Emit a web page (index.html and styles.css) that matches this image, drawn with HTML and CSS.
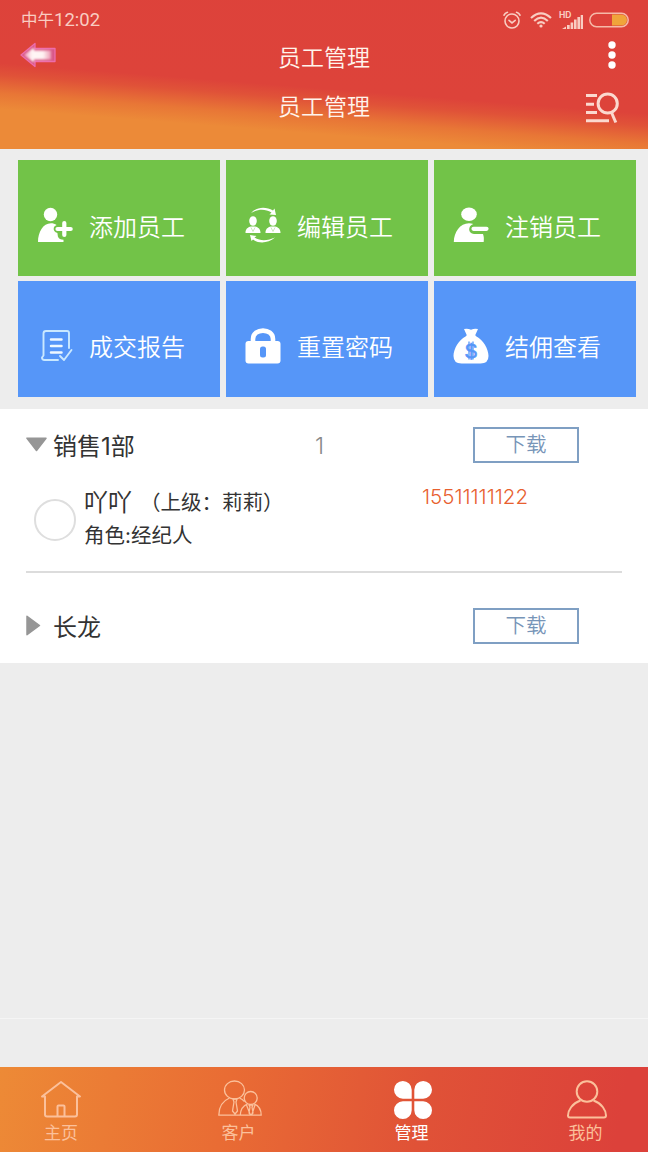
FILE: index.html
```html
<!DOCTYPE html>
<html lang="zh-CN">
<head>
<meta charset="utf-8">
<title>员工管理</title>
<link rel="stylesheet" href="styles.css">
</head>
<body>
<div class="app">
  <header class="header">
    <div class="status">
      <span class="clock">中午<span class="digits">12:02</span></span>
      <div class="status-icons">
        <svg class="alarm" viewBox="0 0 20 18" width="20" height="18" fill="none" stroke="currentColor" stroke-width="1.600" stroke-linecap="round"><circle cx="10" cy="10" r="7"/><path d="M2 4.200Q3 2 5.400 1.300M18 4.200Q17 2 14.600 1.300M7 9.300l3 2.600 3.200-2.600"/></svg>
        <svg class="wifi" viewBox="0 0 22 16" width="22" height="16" fill="none" stroke="currentColor" stroke-width="2.100"><path d="M1 6Q11-3.400 21 6M4.200 9Q11 2.400 17.800 9M7.300 11.800Q11 8.300 14.700 11.800"/><circle cx="11" cy="14" r="1.600" fill="currentColor" stroke="none"/></svg>
        <div class="signal">
          <span class="hd">HD</span>
          <svg viewBox="0 0 22 14" width="22" height="14" fill="currentColor"><path d="M1 14l4-2.500V14zM6 10h2.700v4H6zM9.600 7.500h2.600V14H9.600zM13 4.500h2.600V14H13zM16.400 2H19v12h-2.600zM19.700 0H22v14h-2.300z"/></svg>
        </div>
        <svg viewBox="0 0 40 16" width="40" height="16"><rect x=".8" y="1.200" width="38.400" height="13.600" rx="6.800" fill="none" stroke="#f6b9a8" stroke-width="1.500"/><path d="M23 2.500h9.500a5.500 5.500 0 0 1 0 11H23z" fill="#f0a43b"/></svg>
      </div>
    </div>
    <div class="titlebar">
      <svg class="back" viewBox="0 0 38 28" width="38" height="28">
        <defs>
          <linearGradient id="arrow-fill" x1="0" x2="1"><stop offset="0" stop-color="#f29cbd"/><stop offset=".3" stop-color="#fff5f5"/><stop offset=".7" stop-color="#fff3f3"/><stop offset="1" stop-color="#ec9cb5"/></linearGradient>
          <filter id="arrow-glow" x="-20%" y="-30%" width="140%" height="160%"><feGaussianBlur stdDeviation="1.200"/></filter>
        </defs>
        <path d="M2 14L16 2.500V7.500H36V20.500H16V25.500Z" fill="#d85887" stroke="#ed6cac" stroke-width="1.300" stroke-linejoin="round"/>
        <path d="M5 14L15 6.500V9.500H32V18.500H15V21.500Z" fill="url(#arrow-fill)" filter="url(#arrow-glow)"/>
      </svg>
      <h1 class="title">员工管理</h1>
      <svg class="more" viewBox="0 0 8 28" width="8" height="28" fill="#fff"><circle cx="4" cy="4" r="3.700"/><circle cx="4" cy="14" r="3.700"/><circle cx="4" cy="24" r="3.700"/></svg>
    </div>
    <div class="titlebar sub">
      <h2 class="title">员工管理</h2>
      <svg class="find" viewBox="0 0 34 32" width="34" height="32" fill="none" stroke="#fbd9cf" stroke-width="3"><path d="M0 3.500H11M0 12.200H8M0 20.500H11M0 28.800H23"/><circle cx="21.700" cy="11.500" r="9.600"/><path d="M25.500 20.500L29.800 30.500"/></svg>
    </div>
  </header>

  <main class="content">
    <nav class="tiles">
      <a class="tile green">
        <svg viewBox="0 0 36 36" width="36" height="36" fill="#fff"><circle cx="13.500" cy="7.500" r="6.700"/><path d="M1 35C1 25 6 16.200 14 16.200c2 0 4 .6 5.600 1.700l-2 1.400a4 4 0 0 0 1 6l1.800.6.500 3.500c.8 2.300 2.800 3.300 5.600 3.300V35z"/><path d="M27.300 16v12M20.500 22h13.200" fill="none" stroke="#fff" stroke-width="4.200" stroke-linecap="round"/></svg>
        <span>添加员工</span>
      </a>
      <a class="tile green">
        <svg viewBox="0 0 36 36" width="36" height="36"><g fill="#fff"><ellipse cx="8" cy="14" rx="3.800" ry="4.800"/><ellipse cx="28" cy="14" rx="3.800" ry="4.800"/><path d="M.5 26c0-4 2-5.600 5.500-6.500h4c3.500.9 5.500 2.500 5.500 6.500zM20.500 26c0-4 2-5.600 5.500-6.500h4c3.500.9 5.500 2.500 5.500 6.500zM6 6C12-.5 21-.5 28 3.500L29.500 1.500 31 8 24.500 7.500 26.500 5.500C20 1.800 13 2 6 6zM5 28l6.500 1L9.500 30.500C16 34.500 23 33.600 30 30.500 23 36.300 14 37 8 32.500L6.500 34z"/></g><path d="M6 20.500l2 4 2-4M26 20.500l2 4 2-4" fill="none" stroke="#b5dfa0" stroke-width=".7"/></svg>
        <span>编辑员工</span>
      </a>
      <a class="tile green">
        <svg viewBox="0 0 36 36" width="36" height="36" fill="#fff"><ellipse cx="16" cy="7.300" rx="7.800" ry="6.700"/><path d="M.8 35C1 25 7 16.200 16 16.200c1.500 0 3 .3 4.300.9C14.500 19 15 27 21 27H30c1 2.500 1 5 .7 8z"/><path d="M20.500 21.800H33.500" stroke="#fff" stroke-width="4.200" stroke-linecap="round"/></svg>
        <span>注销员工</span>
      </a>
      <a class="tile blue">
        <svg viewBox="0 0 36 36" width="36" height="36" fill="none" stroke="#c9e8ff" stroke-width="1.900" stroke-linecap="round" stroke-linejoin="round"><path d="M21 32H7.500a2.500 2.500 0 0 1-2.500-2.500l1.500-2V5.500q0-2.500 2.500-2.500H30a2 2 0 0 1 2 2V20"/><path d="M14 11.500H24.500M14 18H24.500M14 24.500H24.500" stroke="#eef8ff" stroke-width="2.500"/><path d="M23 28l4 4 7.500-10"/></svg>
        <span>成交报告</span>
      </a>
      <a class="tile blue">
        <svg viewBox="0 0 36 36" width="36" height="36"><path d="M8 14V11C8-.2 28-.2 28 11v3" fill="none" stroke="#fff" stroke-width="4.600"/><rect x=".5" y="13" width="35" height="22.500" rx="3" fill="#fff"/><rect x="15" y="18.500" width="6" height="11" rx="2.500" fill="#5696f8"/></svg>
        <span>重置密码</span>
      </a>
      <a class="tile blue">
        <svg viewBox="0 0 36 36" width="36" height="36"><path d="M11 1q3.500-1 7 .7Q21.500 0 25 1L22.300 7q.3 1 1.200 1.600C30 12 35.500 21 35.500 28q0 7.500-8 7.500h-19q-8 0-8-7.500C.5 21 6 12 12.500 8.600q.9-.6 1.200-1.600z" fill="#fff"/><text class="dollar" x="18" y="29.500" text-anchor="middle">$</text><path d="M16 13.500V31.500M20 13.500V31.500" stroke="#5696f8" stroke-width="1.300"/></svg>
        <span>结佣查看</span>
      </a>
    </nav>

    <section class="list">
      <div class="dept">
        <svg viewBox="0 0 22 22" width="22" height="22"><path d="M1 4.200H20L10.500 16.500Z" fill="#969696" stroke="#969696" stroke-width="1.500" stroke-linejoin="round"/></svg>
        <span class="name">销售1部</span>
        <span class="count">1</span>
        <a class="download">下载</a>
      </div>
      <div class="member">
        <span class="radio"></span>
        <div class="info">
          <div class="who"><span class="nick">吖吖</span><span class="boss">（上级：莉莉）</span></div>
          <div class="role">角色:经纪人</div>
        </div>
        <span class="phone">15511111122</span>
      </div>
      <div class="dept second">
        <svg viewBox="0 0 22 22" width="22" height="22"><path d="M1 1.300V19.700L13.500 10.500Z" fill="#969696" stroke="#969696" stroke-width="1.500" stroke-linejoin="round"/></svg>
        <span class="name">长龙</span>
        <span class="count"></span>
        <a class="download">下载</a>
      </div>
    </section>
  </main>

  <div class="strip"></div>
  <footer class="tabs">
    <a class="tab">
      <svg viewBox="0 0 44 40" width="44" height="40" fill="none" stroke="currentColor" stroke-width="2" stroke-linejoin="round" stroke-linecap="round"><path d="M3 17.500L22 3 41 17.500H38V35.500q0 2-2 2H8q-2 0-2-2V17.500zM18.500 37V27.500q0-1 1-1h5q1 0 1 1V37"/></svg>
      <span>主页</span>
    </a>
    <a class="tab">
      <svg viewBox="0 0 44 40" width="44" height="40" fill="none" stroke="currentColor" stroke-width="1.300" stroke-linejoin="round"><ellipse cx="16.500" cy="11" rx="10" ry="9"/><circle cx="32.700" cy="19" r="6.500"/><path d="M11.500 19C4.500 22 .8 28 .8 36.200H43.200C43.200 31 40.500 26.500 36 24.800M21.500 19q3 1.200 5 3.700M29.500 24.800C25.500 26.500 22.500 31 22.300 36M15 20h4l-1 3 1.500 9-2.500 3-2.500-3 1.500-9zM31 26h4l-1 2 1 6-2 2-2-2 1-6zM28.500 26l3.500 9M37 26l-3 9"/></svg>
      <span>客户</span>
    </a>
    <a class="tab active">
      <svg viewBox="0 0 44 40" width="44" height="40" fill="#fff"><path d="M20.700 19.700H11.850A8.850 8.850 0 1 1 20.700 10.850zM23.300 19.700H32.150A8.850 8.850 0 1 0 23.300 10.850zM20.700 22.300H11.850A8.850 8.850 0 1 0 20.700 31.150zM23.300 22.300H32.150A8.850 8.850 0 1 1 23.300 31.150z"/></svg>
      <span>管理</span>
    </a>
    <a class="tab">
      <svg viewBox="0 0 44 40" width="44" height="40" fill="none" stroke="currentColor" stroke-width="2"><circle cx="22" cy="12.500" r="10.300"/><path d="M15.500 21.500C7 24.500 3 31.500 3 36.500q0 2 2 2H39q2 0 2-2C41 31.500 37 24.500 28.500 21.500"/></svg>
      <span>我的</span>
    </a>
  </footer>
</div>
</body>
</html>
```

FILE: styles.css
```css
* { box-sizing: border-box; }
body {
  margin: 0;
  background: #ededed;
  font-family: Inter, "Noto Sans CJK SC", sans-serif;
  color: #333;
}
.app { width: 648px; height: 1152px; display: flex; flex-direction: column; }
svg { display: block; flex: none; }

.header {
  height: 149px;
  flex: none;
  background: linear-gradient(184.5deg, #dd423b 0, #dd433a 57%, #e05238 63%, #e87636 72%, #ec8a38 80%);
  color: #fdeae0;
}
.status {
  height: 38px;
  padding: 2px 19px 0 21px;
  display: flex;
  justify-content: space-between;
  align-items: center;
  color: #f9cdc2;
}
.clock { font: 16.500px/24px Roboto, "Noto Sans CJK SC", sans-serif; }
.digits { font-size: 18.500px; }
.status-icons { display: flex; align-items: center; }
.wifi { margin-left: 8px; }
.signal { margin: 0 6px 0 9px; height: 17px; display: flex; align-items: flex-end; position: relative; }
.hd { position: absolute; left: -2px; top: -1px; font: bold 8.500px/8px Inter, sans-serif; }
.titlebar {
  height: 38px;
  padding: 0 32px 0 19px;
  display: grid;
  grid-template-columns: 1fr auto 1fr;
  align-items: center;
}
.titlebar .back { margin-top: -5px; }
.titlebar .more { justify-self: end; margin: -5px 0 0; }
.title {
  margin: -2px 0 0;
  font: 350 23px/34px "Noto Sans CJK SC DemiLight", "Noto Sans CJK SC", sans-serif;
  grid-column: 2;
  transform: translateX(6.500px);
  color: #fff4ec;
}
.sub { height: 60px; padding: 0 28px; }
.sub .title { transform: none; }
.find { justify-self: end; margin-top: 3px; }

.content { flex: 1; padding-top: 11px; }
.tiles {
  display: grid;
  grid-template-columns: 202px 202px 202px;
  grid-auto-rows: 116px;
  gap: 5px 6px;
  padding-left: 18px;
}
.tile {
  display: flex;
  align-items: center;
  padding: 14px 0 0 19px;
  gap: 16px;
  color: #fff;
  font: 350 24px/36px "Noto Sans CJK SC DemiLight", "Noto Sans CJK SC", sans-serif;
}
.green { background: #72c348; }
.green span { padding-top: 2px; }
.blue { background: #5696f8; }
.dollar { font: 21px "Liberation Sans", sans-serif; fill: #5696f8; stroke: #5696f8; stroke-width: .6px; }

.list { margin-top: 12px; height: 254px; padding: 0 26px; background: #fff; }
.dept { height: 72px; display: flex; align-items: center; }
.name { width: 257px; padding: 3px 0 0 5px; font-size: 24px; line-height: 36px; font-weight: 400; }
.count { width: 168px; padding: 1px 0 0 10px; font-size: 23px; color: #888; font-weight: 300; }
.download {
  width: 106px;
  height: 36px;
  border: 2px solid #7f9fc3;
  color: #7795b8;
  font: 350 20.500px/29px "Noto Sans CJK SC DemiLight", "Noto Sans CJK SC", sans-serif;
  text-align: center;
}
.member {
  height: 92px;
  display: flex;
  padding-left: 8px;
  border-bottom: 2px solid #dcdcdc;
}
.radio { width: 42px; height: 42px; margin-top: 18px; border: 2px solid #dedede; border-radius: 50%; }
.info { width: 346px; padding: 5px 0 0 8px; }
.who { height: 33px; line-height: 34px; display: flex; }
.nick { font-size: 24px; }
.boss { font-size: 20.500px; margin-left: 8px; }
.role { font-size: 20.500px; line-height: 34px; }
.phone { font-size: 20.500px; line-height: 32px; color: #e8602f; font-weight: 350; }
.second { height: 90px; padding-top: 16px; }

.strip { height: 49px; flex: none; border-top: 1px solid #f5f5f5; }
.tabs {
  height: 85px;
  flex: none;
  display: grid;
  grid-template-columns: 179px 173px 174px 44px;
  padding: 12px 0 0 39px;
  background: linear-gradient(100deg, #ed8a36 0, #e96c34 35%, #e05237 65%, #dc413a 95%);
  color: #fbc09b;
}
.tab { width: 44px; display: flex; flex-direction: column; align-items: center; font: 17px/25px "Noto Sans CJK SC", sans-serif; }
.tab:nth-child(n+2) span { margin-left: -3px; }
.active { color: #fff; }
```
